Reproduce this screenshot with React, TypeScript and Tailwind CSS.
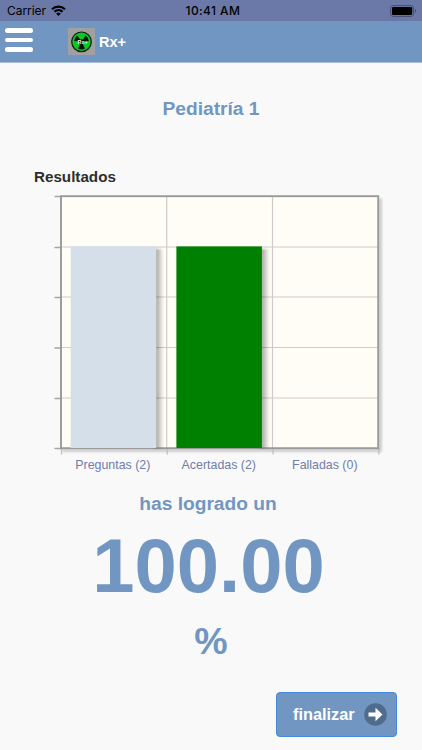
import { useId } from "react";

type Bar = {
  label: string;
  value: number;
  color: string;
};

const bars: Bar[] = [
  { label: "Preguntas", value: 2, color: "#d5dfe9" },
  { label: "Acertadas", value: 2, color: "#008000" },
  { label: "Falladas", value: 0, color: "#c00000" },
];

function StatusBar() {
  return (
    <div className="relative flex h-[21px] items-center justify-between bg-[#6a79a8] pl-[7px] pr-[5px] text-black">
      <div className="flex items-center gap-[5px]">
        <span className="font-[Inter,sans-serif] text-[12px] leading-[22px] tracking-[-0.05px]">Carrier</span>
        <svg width="15" height="11" viewBox="0 0 15 11" fill="none" stroke="#000" strokeWidth="2.2">
          <path d="M1 4.2a9.4 9.4 0 0 1 13 0" />
          <path d="M3.4 6.8a6 6 0 0 1 8.2 0" />
          <path d="M7.5 11 5.2 8.7a3.3 3.3 0 0 1 4.6 0z" fill="#000" stroke="none" />
        </svg>
      </div>
      <span className="absolute left-[185.5px] font-[Inter,sans-serif] text-[12px] font-medium leading-[22px] tracking-[0.4px]">
        10:41 AM
      </span>
      <svg width="27" height="12" viewBox="0 0 27 12">
        <rect x="0.6" y="0.6" width="23" height="10.8" rx="2.6" fill="none" stroke="#454f70" strokeWidth="1" />
        <rect x="2" y="2" width="20.2" height="8" rx="1.3" />
        <path d="M25 4v4c1.5-.6 1.5-3.4 0-4z" fill="#454f70" />
      </svg>
    </div>
  );
}

function RadiationLogo() {
  return (
    <svg width="27" height="27" viewBox="0 0 27 27">
      <rect width="27" height="27" fill="#a0a0a3" />
      <circle cx="13.5" cy="13.8" r="9.8" fill="#0cc824" stroke="#101b14" strokeWidth="1.2" />
      <g fill="#061108">
        <path d="M13.5 13.8 6.2 13A7.6 7.6 0 0 1 9.4 7.4z" />
        <path d="M13.5 13.8 17.6 7.4A7.6 7.6 0 0 1 20.8 13z" />
        <path d="M13.5 13.8 17 20.6A7.6 7.6 0 0 1 10 20.6z" />
        <circle cx="13.5" cy="13.8" r="2.6" />
      </g>
      <text x="14.6" y="15.8" textAnchor="middle" fontFamily="Liberation Sans, sans-serif" fontSize="5.4" fontWeight="700" fill="#eef5ef">
        Rx+
      </text>
    </svg>
  );
}

function Header() {
  return (
    <header className="flex h-[42px] items-center border-b border-[#a9bdd7] bg-[#7196c2]">
      <button aria-label="Menú" className="ml-[5px] mb-[3px] flex w-[28px] flex-col gap-[4.7px]">
        <span className="h-[4.7px] rounded-full bg-white" />
        <span className="h-[4.7px] rounded-full bg-white" />
        <span className="h-[4.7px] rounded-full bg-white" />
      </button>
      <div className="ml-[35px] flex items-center gap-[4px]">
        <RadiationLogo />
        <span className="pt-[2px] text-[14.5px] font-bold text-white">Rx+</span>
      </div>
    </header>
  );
}

function ResultsChart() {
  const id = useId();
  const shadowId = `${id}shadow`;
  const blurId = `${id}blur`;
  const rows = [196, 247, 297, 347.5, 398, 448];
  const columns = [61, 166.7, 272.5, 378.3];

  return (
    <svg className="block" width="422" height="292" viewBox="0 190 422 292" fontFamily="Liberation Sans, Arial, sans-serif">
      <defs>
        <filter id={blurId}>
          <feGaussianBlur stdDeviation="0.8" />
        </filter>
        <linearGradient id={shadowId}>
          <stop offset="0" stopColor="#000" stopOpacity="0.38" />
          <stop offset="0.4" stopColor="#000" stopOpacity="0.25" />
          <stop offset="1" stopColor="#000" stopOpacity="0" />
        </linearGradient>
      </defs>

      <path d="M380.3 198.5V450.3H62" fill="none" stroke="#000" strokeOpacity="0.2" strokeWidth="3" filter={`url(#${blurId})`} />
      <rect x="61" y="196" width="317" height="252" fill="#fffdf6" />

      {rows.slice(1, 5).map((y) => (
        <path key={y} d={`M61 ${y}H378`} stroke="#cccccc" strokeWidth="1.2" />
      ))}
      {columns.slice(1, 3).map((x) => (
        <path key={x} d={`M${x} 196V448`} stroke="#cccccc" strokeWidth="1.2" />
      ))}
      {rows.map((y) => (
        <path key={y} d={`M54.5 ${y + 0.5}H61`} stroke="#a5a5a5" strokeWidth="1.5" />
      ))}
      {columns.map((x) => (
        <path key={x} d={`M${x + 0.5} 448V454.5`} stroke="#c2c2c2" strokeWidth="1.4" />
      ))}

      <rect x="61" y="196.2" width="317.2" height="252" fill="none" stroke="#999999" strokeWidth="1.9" />

      {bars.map((bar, i) => {
        const x = 70.7 + i * 105.7;
        const height = bar.value * 100.8;
        return (
          <g key={bar.label}>
            {height > 0 && (
              <>
                <rect
                  x={x + 84}
                  y={450.5 - height}
                  width="9"
                  height={height - 2.5}
                  fill={`url(#${shadowId})`}
                  filter={`url(#${blurId})`}
                />
                <rect x={x} y={448 - height} width="85.5" height={height} fill={bar.color} />
              </>
            )}
            <text
              x={112.8 + i * 106}
              y="469.2"
              textAnchor="middle"
              fontSize="12.4"
              fill="#707caa"
            >
              {bar.label} ({bar.value})
            </text>
          </g>
        );
      })}
    </svg>
  );
}

function FinishButton() {
  return (
    <button className="flex h-[45px] w-[121px] items-center justify-between rounded-[4px] border border-[#4389df] bg-[#7196c2] pl-[16px] pr-[9px] font-bold text-white">
      <span className="pt-[1px] text-[16.3px] leading-none">finalizar</span>
      <svg width="23" height="23" viewBox="0 0 23 23">
        <circle cx="11.5" cy="11.5" r="11.3" fill="#506c8c" />
        <path d="M4.5 9.5h7V4.8l7 6.7-7 6.7v-4.7h-7z" fill="#fff" />
      </svg>
    </button>
  );
}

export default function App() {
  return (
    <div className="flex h-[750px] w-[422px] flex-col overflow-hidden bg-[#f9f9f9] font-['Liberation_Sans',Arial,sans-serif]">
      <StatusBar />
      <Header />
      <main className="flex flex-1 flex-col text-[#7196c2]">
        <h1 className="mt-[34px] text-center text-[19.2px] font-bold leading-[24px]">Pediatría 1</h1>
        <h2 className="ml-[34px] mt-[46px] text-[15.2px] font-bold leading-[20px] text-[#2d2d2d]">Resultados</h2>
        <div className="mt-[3px]">
          <ResultsChart />
        </div>
        <p className="mt-[10px] pr-[6px] text-center text-[19.2px] font-bold leading-[24px]">has logrado un</p>
        <p className="mt-[4px] pr-[5px] text-center text-[76px] font-bold leading-[92px]">100.00</p>
        <p className="mt-[7px] text-center text-[37.5px] font-bold leading-[44px]">%</p>
        <div className="mt-[28.5px] flex justify-end pr-[25px]">
          <FinishButton />
        </div>
      </main>
    </div>
  );
}
